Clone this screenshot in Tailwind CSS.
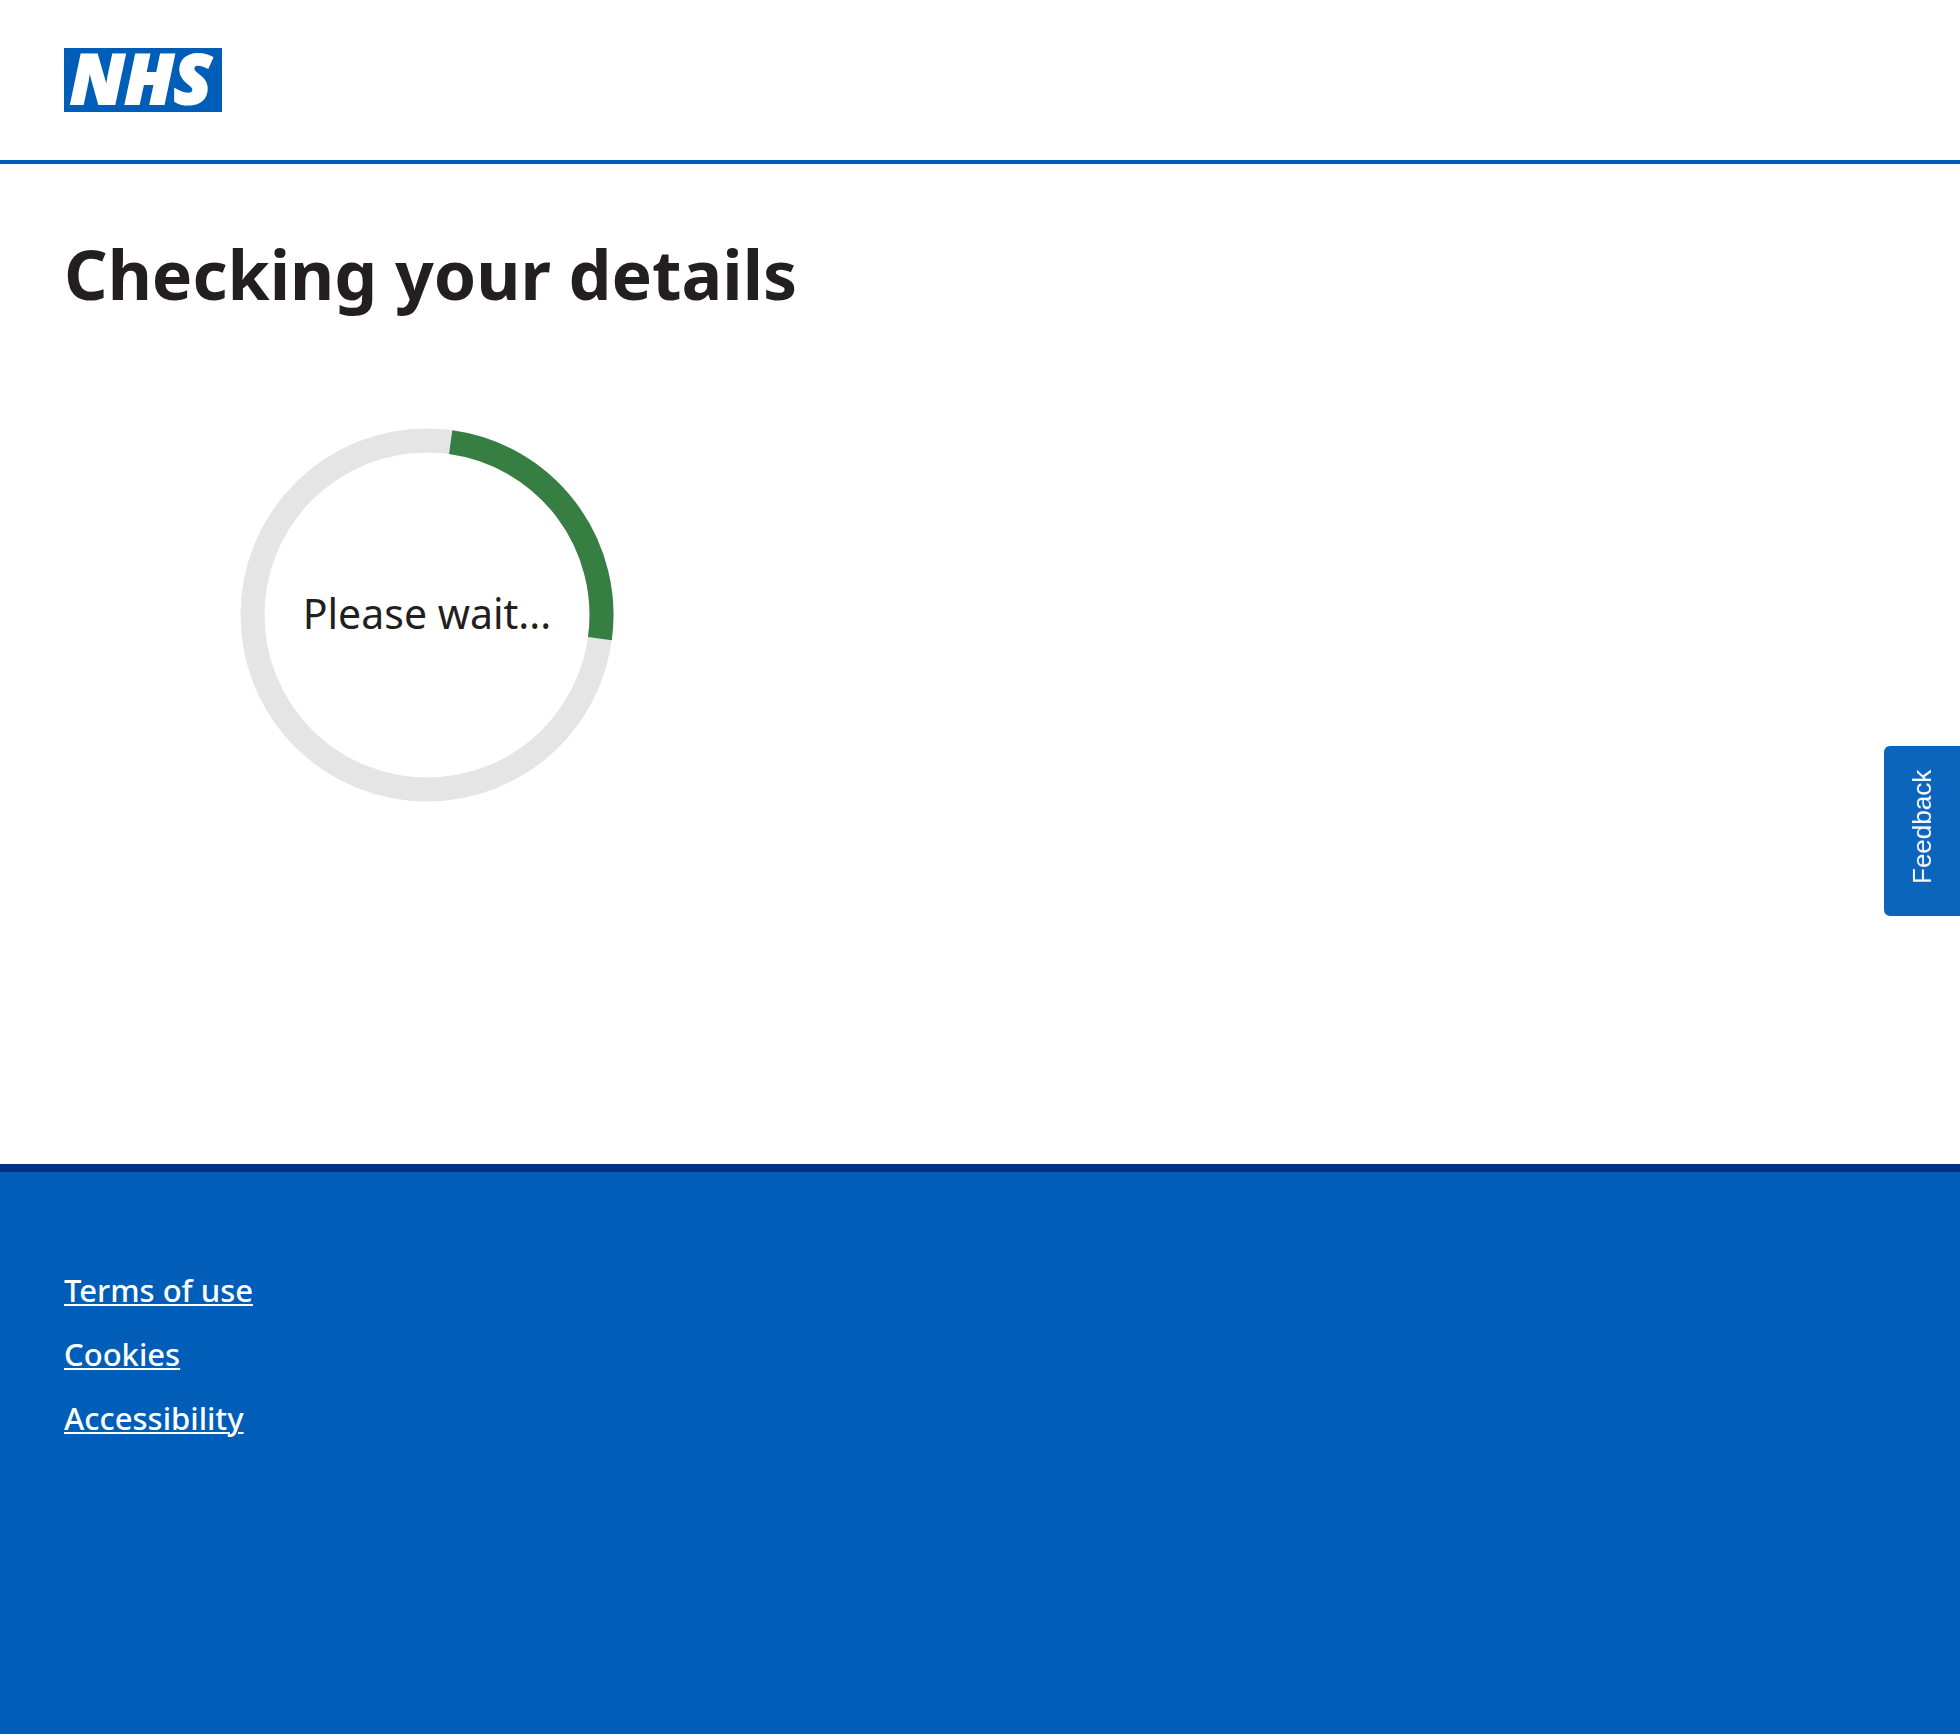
<!DOCTYPE html>
<html lang="en">
<head>
<meta charset="utf-8">
<meta name="viewport" content="width=device-width, initial-scale=1">
<title>Checking your details - NHS</title>
<script src="https://cdn.jsdelivr.net/npm/@tailwindcss/browser@4"></script>
</head>
<body class="flex min-h-screen flex-col bg-white font-['Noto_Sans','Open_Sans',sans-serif] text-[#231f20]">
  <header class="flex border-b-4 border-[#005eb8] px-16 py-12">
    <a href="#" aria-label="NHS homepage">
      <svg class="block h-16 w-[158px] overflow-visible" viewBox="0 0 158 64" role="img" aria-label="NHS">
        <rect width="158" height="64" fill="#005eb8"/>
        <text x="6" y="56" fill="#fff" stroke="#fff" stroke-width="2" font-family="'Open Sans', sans-serif" font-size="69" font-weight="800" font-style="italic">NHS</text>
      </svg>
    </a>
  </header>

  <main class="px-16 pt-[70px] pb-[362px]">
    <h1 class="text-[68px] leading-[80px] font-bold">Checking your details</h1>
    <div class="mt-[114px] ml-44 grid size-[374px] place-items-center" role="status">
      <svg class="col-start-1 row-start-1 size-full" viewBox="0 0 374 374" fill="none" stroke-width="24" aria-hidden="true">
        <circle cx="187" cy="187" r="174.5" stroke="#e5e5e5"/>
        <circle cx="187" cy="187" r="174.5" stroke="#377e43" pathLength="360" stroke-dasharray="90 270" transform="rotate(-82.2 187 187)"/>
      </svg>
      <p class="col-start-1 row-start-1 pb-1 text-[41px] leading-[56px]">Please wait...</p>
    </div>
  </main>

  <footer class="flex-1 border-t-8 border-[#003087] bg-[#005eb8] px-16 pt-[86px] pb-16">
    <ul class="text-[31px] leading-[64px] font-medium text-white">
      <li><a href="#" class="underline decoration-2 underline-offset-2">Terms of use</a></li>
      <li><a href="#" class="underline decoration-2 underline-offset-2">Cookies</a></li>
      <li><a href="#" class="underline decoration-2 underline-offset-2">Accessibility</a></li>
    </ul>
  </footer>

  <button type="button" class="fixed top-[746px] right-0 flex h-[170px] w-[76px] rotate-180 items-center justify-center rounded-r-md bg-[#0b65bd] pt-2 font-['Liberation_Sans',sans-serif] text-[26px] leading-8 text-white [writing-mode:vertical-rl]">Feedback</button>
</body>
</html>
